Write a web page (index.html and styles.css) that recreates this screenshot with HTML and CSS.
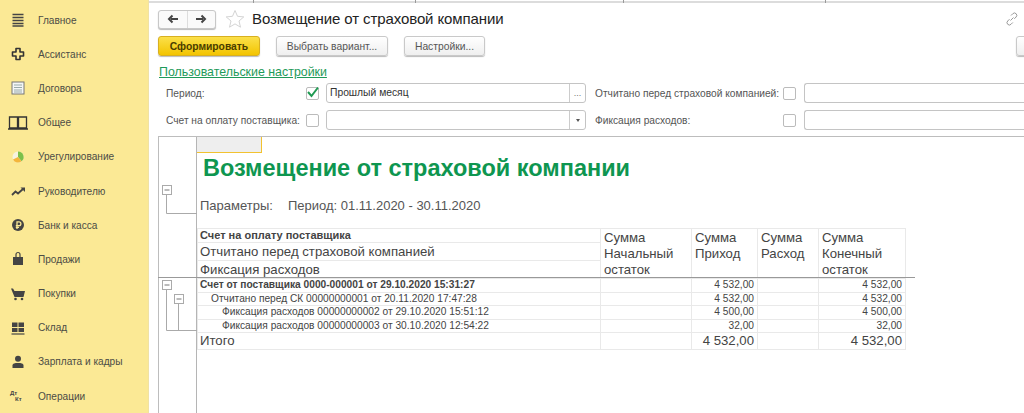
FILE: index.html
```html
<!DOCTYPE html>
<html lang="ru">
<head>
<meta charset="utf-8">
<title>Возмещение от страховой компании</title>
<link rel="stylesheet" href="styles.css">
</head>
<body>
<nav class="side">
  <div class="item"><svg class="ico" viewBox="0 0 16 16"><path d="M2.500 2.500h11M2.500 5.500h11M2.500 8.500h11M2.500 11.500h11M2.500 14h11" stroke="#444" stroke-width="1.300" fill="none"/></svg><span>Главное</span></div>
  <div class="item"><svg class="ico" viewBox="0 0 16 16"><path d="M6 2.500h4v3.500h3.500v4H10v3.500H6V10H2.500V6H6z" stroke="#333" stroke-width="1.600" fill="#fbe995" stroke-linejoin="round"/></svg><span>Ассистанс</span></div>
  <div class="item"><svg class="ico" viewBox="0 0 16 16"><rect x="2" y="2" width="12" height="12" fill="#f4f6f6" stroke="#777"/><path d="M4 5h8M4 7.500h8M4 10h8M4 12h8" stroke="#9aa" fill="none"/></svg><span>Договора</span></div>
  <div class="item"><svg class="ico ico-wide" viewBox="0 0 20 16"><path d="M1.500 2h8v11h-8zM10.500 2h8v11h-8zM0 14h20" stroke="#333" stroke-width="1.300" fill="none"/></svg><span>Общее</span></div>
  <div class="item"><svg class="ico" viewBox="0 0 16 16"><circle cx="8" cy="8" r="5.500" fill="#f6f3e0"/><path d="M8 8V2.500A5.500 5.500 0 0 1 11.500 12.300z" fill="#7cc04a"/><path d="M8 8l3.500 4.300A5.500 5.500 0 0 1 3 10.500z" fill="#f4b63c"/></svg><span>Урегулирование</span></div>
  <div class="item"><svg class="ico" viewBox="0 0 16 16"><path d="M2 12l3.500-3.500 2.500 2L13 6" stroke="#444" stroke-width="1.800" fill="none"/><path d="M10.500 4.500H15V9z" fill="#444"/></svg><span>Руководителю</span></div>
  <div class="item"><svg class="ico" viewBox="0 0 16 16"><circle cx="8" cy="8" r="6" fill="#444"/><path d="M7 12V4.800h2a1.800 1.800 0 0 1 0 3.800H5.800M5.800 10.400H9" stroke="#fbe995" stroke-width="1.300" fill="none"/></svg><span>Банк и касса</span></div>
  <div class="item"><svg class="ico" viewBox="0 0 16 16"><path d="M3 6h10v8H3z" fill="#444"/><path d="M6 7V3.500a2 2 0 0 1 4 0V7" stroke="#444" stroke-width="1.200" fill="none"/></svg><span>Продажи</span></div>
  <div class="item"><svg class="ico" viewBox="0 0 16 16"><path d="M1 2.500h2L4.500 5H15l-1.500 6h-9z" fill="#444"/><circle cx="5.500" cy="13" r="1.300" fill="#444"/><circle cx="12" cy="13" r="1.300" fill="#444"/></svg><span>Покупки</span></div>
  <div class="item"><svg class="ico" viewBox="0 0 16 16"><path d="M2 2.500h5.500v4.500H2zM8.500 2.500H14v4.500H8.500zM2 8h5.500v4H2zM8.500 8H14v4H8.500z" fill="#444"/><path d="M1.500 14h13" stroke="#444" stroke-width="1.200"/></svg><span>Склад</span></div>
  <div class="item"><svg class="ico" viewBox="0 0 16 16"><circle cx="8" cy="4.800" r="3" fill="#444"/><path d="M2.500 14v-2.500C2.500 9.500 5 9 8 9s5.500.5 5.500 2.500V14z" fill="#444"/></svg><span>Зарплата и кадры</span></div>
  <div class="item"><span class="dtkt"><b>Дт</b><b class="kt">Кт</b></span><span>Операции</span></div>
</nav>

<main class="main">
  <div class="tabs"><i class="tab t1"></i><i class="tab t2"></i><i class="tab t3"></i><i class="tab t4"></i></div>

  <header class="titlebar">
    <div class="nav">
      <button class="navbtn"><svg width="12" height="10" viewBox="0 0 12 10"><path d="M11 5H4M5.500 1.500L2 5l3.500 3.500" stroke="#444" stroke-width="2" fill="none"/></svg></button>
      <button class="navbtn"><svg width="12" height="10" viewBox="0 0 12 10"><path d="M1 5h7M6.500 1.500L10 5 6.500 8.500" stroke="#444" stroke-width="2" fill="none"/></svg></button>
    </div>
    <svg class="star" viewBox="0 0 20 20"><path d="M10 1.500l2.500 5.800 6.300.6-4.800 4.100 1.500 6.200L10 14.900l-5.500 3.300L6 12 1.200 7.900l6.300-.6z" fill="none" stroke="#d4d4d4"/></svg>
    <h1 class="title">Возмещение от страховой компании</h1>
    <svg class="linkico" viewBox="0 0 14 14"><path d="M6 3.500l1.800-1.800a2.300 2.300 0 0 1 3.300 3.300L9.300 6.800M7.800 10.500L6 12.300a2.300 2.300 0 0 1-3.300-3.300l1.800-1.800M5.500 8.500l3-3" stroke="#999" fill="none"/></svg>
  </header>

  <div class="toolbar">
    <button class="btn primary">Сформировать</button>
    <button class="btn b2">Выбрать вариант...</button>
    <button class="btn b3">Настройки...</button>
    <button class="btn b4"></button>
  </div>

  <a class="userlink">Пользовательские настройки</a>

  <div class="form">
    <div class="row">
      <label class="lbl l1">Период:</label>
      <span class="chk checked"><svg width="14" height="12" viewBox="0 0 14 12"><path d="M2 6l3.500 4L12 1.500" stroke="#1f9a52" stroke-width="2" fill="none"/></svg></span>
      <span class="field f1"><span class="val">Прошлый месяц</span><span class="fbtn dots">...</span></span>
      <label class="lbl l2">Отчитано перед страховой компанией:</label>
      <span class="chk"></span>
      <span class="field f2"></span>
    </div>
    <div class="row">
      <label class="lbl l1">Счет на оплату поставщика:</label>
      <span class="chk"></span>
      <span class="field f1"><span class="val"></span><span class="fbtn"><i class="caret"></i></span></span>
      <label class="lbl l2">Фиксация расходов:</label>
      <span class="chk"></span>
      <span class="field f2"></span>
    </div>
  </div>

  <section class="report">
    <div class="gutter">
      <svg class="gsvg" width="38" height="276" viewBox="0 0 38 276">
        <rect x="3.500" y="48.500" width="9" height="9" fill="#fff" stroke="#aaa"/><path d="M5.500 53h5" stroke="#777"/>
        <path d="M7.500 58v18.500H38" stroke="#aaa" fill="none"/>
        <rect x="3.500" y="143.500" width="9" height="9" fill="#fff" stroke="#aaa"/><path d="M5.500 148h5" stroke="#777"/>
        <rect x="15.500" y="157.500" width="9" height="9" fill="#fff" stroke="#aaa"/><path d="M17.500 162h5" stroke="#777"/>
        <path d="M7.500 153v40.500H38M19.500 167v26" stroke="#aaa" fill="none"/>
      </svg>
    </div>
    <div class="sheet">
      <div class="corner"></div>
      <h2 class="rtitle">Возмещение от страховой компании</h2>
      <p class="params"><span>Параметры:</span><span>Период: 01.11.2020 - 30.11.2020</span></p>
      <table class="grid">
        <colgroup><col class="c1"><col class="c2"><col class="c3"><col class="c4"><col class="c5"></colgroup>
        <thead>
          <tr class="h1"><th class="small">Счет на оплату поставщика</th><th rowspan="3">Сумма<br>Начальный<br>остаток</th><th rowspan="3">Сумма<br>Приход</th><th rowspan="3">Сумма<br>Расход</th><th rowspan="3">Сумма<br>Конечный<br>остаток</th></tr>
          <tr class="h2"><th>Отчитано перед страховой компанией</th></tr>
          <tr class="h2 h3"><th>Фиксация расходов</th></tr>
        </thead>
        <tbody>
          <tr class="bold"><td>Счет от поставщика 0000-000001 от 29.10.2020 15:31:27</td><td></td><td class="num">4 532,00</td><td></td><td class="num">4 532,00</td></tr>
          <tr><td class="lv1">Отчитано перед СК 00000000001 от 20.11.2020 17:47:28</td><td></td><td class="num">4 532,00</td><td></td><td class="num">4 532,00</td></tr>
          <tr><td class="lv2">Фиксация расходов 00000000002 от 29.10.2020 15:51:12</td><td></td><td class="num">4 500,00</td><td></td><td class="num">4 500,00</td></tr>
          <tr><td class="lv2">Фиксация расходов 00000000003 от 30.10.2020 12:54:22</td><td></td><td class="num">32,00</td><td></td><td class="num">32,00</td></tr>
          <tr class="total"><td>Итого</td><td></td><td class="num">4 532,00</td><td></td><td class="num">4 532,00</td></tr>
        </tbody>
      </table>
      <div class="headline"></div>
    </div>
  </section>
</main>
</body>
</html>
```

FILE: styles.css
```css
* { box-sizing: border-box; }
html, body { margin: 0; height: 413px; overflow: hidden; }
body { display: flex; background: #fff; font-family: "Liberation Sans", Arial, sans-serif; color: #4a4a4a; }

.side { width: 149px; flex: none; height: 413px; padding-top: 3px; background: #fbe995; border-right: 1px solid #f0e2a4; }
.item { height: 34.2px; display: flex; align-items: center; font-size: 10.1px; color: #4c4c45; }
.ico { width: 16px; height: 16px; margin-left: 10px; margin-right: 12px; flex: none; }
.ico-wide { width: 20px; margin-left: 8px; margin-right: 10px; }
.dtkt { width: 16px; margin: 0 12px 0 10px; display: flex; flex-direction: column; font-size: 6px; line-height: 6px; color: #444; }
.kt { padding-left: 5px; }

.main { flex: 1; min-width: 0; height: 413px; padding-left: 9px; position: relative; overflow: hidden; }
.tabs { height: 3px; margin-left: -9px; border-bottom: 2px solid #dcdcdc; display: flex; }
.tab { display: block; width: 1px; height: 3px; background: #999; flex: none; }
.t1 { margin-left: 104px; } .t2 { margin-left: 161px; } .t3 { margin-left: 207px; } .t4 { margin-left: 201px; }

.titlebar { display: flex; align-items: center; height: 20px; margin-top: 6px; }
.nav { display: flex; width: 58px; height: 19px; flex: none; border: 1px solid #c8c8c8; border-radius: 3px; box-shadow: 0 1px 1px #bbb; background: #fafafa; }
.navbtn { flex: 1; padding: 0; border: 0; background: none; display: flex; align-items: center; justify-content: center; }
.navbtn + .navbtn { border-left: 1px solid #ddd; }
.star { width: 20px; height: 20px; margin-left: 9px; flex: none; }
.title { margin: 0 0 0 7px; font-size: 15px; line-height: 20px; font-weight: 400; color: #222; letter-spacing: -.1px; flex: 1; }
.linkico { width: 14px; height: 14px; margin-right: 5px; }

.toolbar { display: flex; height: 20px; margin-top: 7px; }
.btn { height: 20px; padding: 0; flex: none; border: 1px solid #c9c9c9; border-radius: 3px; background: linear-gradient(#fff, #efefef); box-shadow: 0 1px 1px #bbb; font: 10.3px "Liberation Sans", Arial, sans-serif; color: #555; }
.primary { width: 102px; background: linear-gradient(#fbe04a, #f3c400); border-color: #d8b020; color: #4a3d00; font-weight: 700; }
.b2 { width: 112px; margin-left: 16px; }
.b3 { width: 81px; margin-left: 16px; }
.b4 { width: 20px; margin-left: 531px; }

.userlink { display: block; margin-top: 9px; margin-left: 1px; font-size: 12.4px; line-height: 15px; color: #1e9a5a; text-decoration: underline; }

.form { margin-top: 3px; }
.row { display: flex; align-items: center; height: 20px; margin-bottom: 7px; white-space: nowrap; }
.lbl { font-size: 10.2px; color: #555; }
.l1 { width: 140px; margin-left: 8px; flex: none; }
.l2 { width: 188px; margin-left: 9px; flex: none; }
.chk { width: 13px; height: 13px; flex: none; border: 1px solid #bbb; border-radius: 2px; background: #fff; position: relative; }
.checked svg { position: absolute; left: -1px; top: -2px; }
.field { height: 20px; flex: none; display: flex; border: 1px solid #c4c4c4; border-radius: 3px; background: #fff; }
.f1 { width: 260px; margin-left: 7px; }
.f2 { width: 240px; margin-left: 8px; border-right: 0; border-radius: 3px 0 0 3px; }
.val { flex: 1; padding-left: 3px; font-size: 10.3px; line-height: 18px; color: #333; }
.fbtn { width: 16px; border-left: 1px solid #ccc; display: flex; align-items: center; justify-content: center; font-size: 9px; color: #777; }
.caret { width: 0; height: 0; border: 2.500px solid transparent; border-top: 3px solid #555; border-bottom: 0; }

.report { display: flex; height: 283px; border-top: 1px solid #bdbdbd; border-left: 1px solid #bdbdbd; margin-top: -1px; }
.gutter { width: 38px; flex: none; border-right: 1px solid #b5b5b5; }
.gsvg { display: block; }
.sheet { flex: 1; min-width: 0; position: relative; }
.corner { width: 65px; height: 16px; background: #eee; border-right: 1px solid #f2c230; border-bottom: 1px solid #f2c230; }
.rtitle { margin: 1px 0 0 6px; font-size: 23.5px; line-height: 28px; color: #0e9650; white-space: nowrap; font-weight: 700; }
.params { display: flex; gap: 15px; margin: 15px 0 0 3px; font-size: 13px; line-height: 18px; color: #555; }
.grid { margin-top: 13px; width: 708px; table-layout: fixed; border-collapse: collapse; color: #444; }
.c1 { width: 403px; } .c2 { width: 91px; } .c3 { width: 66px; } .c4 { width: 61px; } .c5 { width: 87px; }
.grid th, .grid td { border: 1px solid #e9e9e9; padding: 0 2px; font-weight: 400; text-align: left; white-space: nowrap; overflow: hidden; }
.grid thead th { font-size: 13.2px; line-height: 16px; vertical-align: top; padding-left: 3px; padding-top: 1px; }
.h1 { height: 14px; }
.h2 { height: 18px; }
.grid .h1 th.small { font-size: 11px; line-height: 12px; font-weight: 700; padding-left: 2px; padding-top: 0; }
.grid .h2 th { line-height: 17px; padding-left: 2px; padding-top: 0; }
.grid tbody tr { height: 13.500px; }
.grid td { font-size: 10.2px; line-height: 12px; }
.bold td { font-weight: 700; }
.bold td.num { font-weight: 400; }
.lv1 { padding-left: 13px !important; }
.lv2 { padding-left: 24px !important; }
.num { text-align: right !important; padding-right: 3px !important; }
.grid .total { height: 17px; }
.grid .total td { font-size: 13.2px; line-height: 16px; }
.headline { position: absolute; left: -39px; top: 140px; width: 757px; height: 1px; background: #999; }
```
